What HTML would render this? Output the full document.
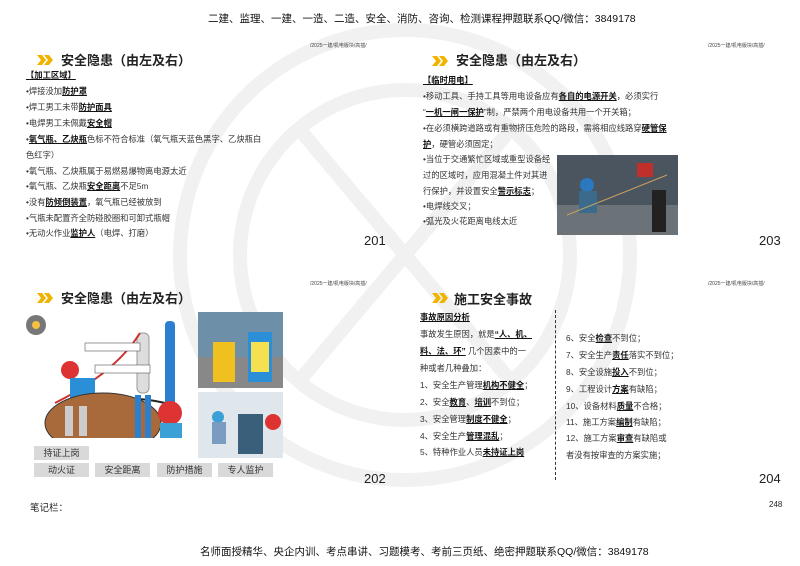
<!DOCTYPE html>
<html><head><meta charset="utf-8"><style>
*{margin:0;padding:0;box-sizing:border-box}
body{width:800px;height:566px;background:#fff;position:relative;overflow:hidden;font-family:"Liberation Sans","Noto Sans CJK SC",sans-serif;color:#222}
.a{position:absolute;white-space:nowrap}
.hd{font-size:10.5px;color:#111}
.path{font-size:5px;color:#444}
.tt{font-size:13px;font-weight:bold;color:#222}
.t{font-size:8.3px;color:#333}
.t b{font-weight:bold;text-decoration:underline;color:#111}
.pn{font-size:13px;color:#222}
.arrow{position:absolute;width:16px;height:10px}
.btn{position:absolute;background:#d9d9d9;font-size:9px;text-align:center;line-height:14px;color:#333;height:14px}
</style></head><body>
<svg class="a" style="left:0;top:0" width="800" height="566">
<g fill="none" stroke="#f1f1f1" stroke-width="14">
<circle cx="405" cy="255" r="225"/><circle cx="405" cy="255" r="165"/>
<path d="M300 130 L405 255 L510 130"/><path d="M300 380 L405 255 L510 380"/>
</g>
</svg>
<div class="a hd" style="left:208px;top:11px">二建、监理、一建、一造、二造、安全、消防、咨询、检测课程押题联系QQ/微信：3849178</div>

<!-- panel 201 -->
<div class="a path" style="left:310px;top:42px">/2025一建/机电版块/高插/</div>
<svg class="arrow" style="left:37px;top:55px" viewBox="0 0 16 10"><path d="M0 0h5l4 5-4 5H0l4-5z M7 0h5l4 5-4 5H7l4-5z" fill="#f0b400"/></svg>
<div class="a tt" style="left:61px;top:50px">安全隐患（由左及右）</div>
<div class="a t" style="left:26px;top:69px"><b>【加工区域】</b></div>
<div class="a t" style="left:26px;top:85px">•焊接没加<b>防护罩</b></div>
<div class="a t" style="left:26px;top:101px">•焊工男工未带<b>防护面具</b></div>
<div class="a t" style="left:26px;top:117px">•电焊男工未佩戴<b>安全帽</b></div>
<div class="a t" style="left:26px;top:133px">•<b>氧气瓶、乙炔瓶</b>色标不符合标准（氧气瓶天蓝色黑字、乙炔瓶白</div>
<div class="a t" style="left:26px;top:149px">色红字）</div>
<div class="a t" style="left:26px;top:165px">•氧气瓶、乙炔瓶属于易燃易爆物离电源太近</div>
<div class="a t" style="left:26px;top:180px">•氧气瓶、乙炔瓶<b>安全距离</b>不足5m</div>
<div class="a t" style="left:26px;top:196px">•没有<b>防倾倒装置</b>，氧气瓶已经被放到</div>
<div class="a t" style="left:26px;top:212px">•气瓶未配置齐全防碰胶圈和可卸式瓶帽</div>
<div class="a t" style="left:26px;top:227px">•无动火作业<b>监护人</b>（电焊、打磨）</div>
<div class="a pn" style="left:364px;top:233px">201</div>

<!-- panel 203 -->
<div class="a path" style="left:708px;top:42px">/2025一建/机电版块/高插/</div>
<svg class="arrow" style="left:432px;top:56px" viewBox="0 0 16 10"><path d="M0 0h5l4 5-4 5H0l4-5z M7 0h5l4 5-4 5H7l4-5z" fill="#f0b400"/></svg>
<div class="a tt" style="left:456px;top:50px">安全隐患（由左及右）</div>
<div class="a t" style="left:423px;top:74px"><b>【临时用电】</b></div>
<div class="a t" style="left:423px;top:90px">•移动工具、手持工具等用电设备应有<b>各自的电源开关</b>，必须实行</div>
<div class="a t" style="left:423px;top:106px">“<b>一机一闸一保护</b>”制，严禁两个用电设备共用一个开关箱；</div>
<div class="a t" style="left:423px;top:122px">•在必须横跨道路或有重物挤压危险的路段，需将相应线路穿<b>硬管保</b></div>
<div class="a t" style="left:423px;top:138px"><b>护</b>，硬管必须固定；</div>
<div class="a t" style="left:423px;top:153px">•当位于交通繁忙区域或重型设备经</div>
<div class="a t" style="left:423px;top:169px">过的区域时，应用混凝土件对其进</div>
<div class="a t" style="left:423px;top:185px">行保护，并设置安全<b>警示标志</b>；</div>
<div class="a t" style="left:423px;top:200px">•电焊线交叉；</div>
<div class="a t" style="left:423px;top:215px">•弧光及火花距离电线太近</div>
<svg class="a" style="left:557px;top:155px" width="121" height="80"><rect width="121" height="80" fill="#4a5560"/><rect x="0" y="50" width="121" height="30" fill="#6b7278"/><rect x="80" y="8" width="16" height="14" fill="#c0302a"/><rect x="95" y="35" width="14" height="42" fill="#222"/><circle cx="30" cy="30" r="7" fill="#2a78c0"/><rect x="22" y="36" width="18" height="22" fill="#3b6a8a"/><path d="M10 60 Q60 40 110 20" stroke="#c9a060" fill="none"/></svg>
<div class="a pn" style="left:759px;top:233px">203</div>

<!-- panel 202 -->
<div class="a path" style="left:310px;top:280px">/2025一建/机电版块/高插/</div>
<svg class="arrow" style="left:37px;top:293px" viewBox="0 0 16 10"><path d="M0 0h5l4 5-4 5H0l4-5z M7 0h5l4 5-4 5H7l4-5z" fill="#f0b400"/></svg>
<div class="a tt" style="left:61px;top:288px">安全隐患（由左及右）</div>
<svg class="a" style="left:25px;top:313px" width="170" height="125">
<circle cx="11" cy="12" r="10" fill="#777"/><circle cx="11" cy="12" r="4" fill="#f5c040"/>
<rect x="140" y="8" width="10" height="88" rx="4" fill="#2a7fcf"/><rect x="112" y="20" width="12" height="60" rx="5" fill="#ddd" stroke="#999"/>
<path d="M30 90 Q90 60 115 20" stroke="#c33" fill="none" stroke-width="2"/><path d="M40 92 Q100 80 140 90" stroke="#222" fill="none" stroke-width="2"/>
<circle cx="45" cy="57" r="9" fill="#d33"/><rect x="45" y="65" width="25" height="20" fill="#2a8fd6"/>
<rect x="60" y="30" width="55" height="8" fill="#fff" stroke="#555" stroke-width=".6"/><rect x="70" y="52" width="55" height="8" fill="#fff" stroke="#555" stroke-width=".6"/>
<ellipse cx="78" cy="110" rx="58" ry="30" fill="#a86a3a" stroke="#333"/><rect x="110" y="82" width="6" height="52" fill="#2a7fcf"/><rect x="120" y="82" width="6" height="52" fill="#2a7fcf"/>
<rect x="40" y="93" width="8" height="30" fill="#ccc"/><rect x="54" y="93" width="8" height="30" fill="#ccc"/>
<circle cx="145" cy="100" r="12" fill="#d33"/><rect x="135" y="110" width="22" height="20" fill="#3aa0d6"/>
</svg>
<svg class="a" style="left:198px;top:312px" width="85" height="76"><rect width="85" height="76" fill="#6d8fa8"/><rect y="45" width="85" height="31" fill="#888"/><rect x="15" y="30" width="22" height="40" fill="#f0c020"/><rect x="50" y="20" width="24" height="50" fill="#2a8fd6"/><rect x="53" y="30" width="18" height="30" fill="#f5e050"/></svg>
<svg class="a" style="left:198px;top:392px" width="85" height="66"><rect width="85" height="66" fill="#dfe6ec"/><rect x="40" y="22" width="25" height="40" fill="#3a5f7a"/><circle cx="20" cy="25" r="6" fill="#3aa0d6"/><rect x="14" y="30" width="14" height="22" fill="#7b9cc0"/><circle cx="75" cy="30" r="8" fill="#d33"/></svg>
<div class="btn" style="left:34px;top:446px;width:55px">持证上岗</div>
<div class="btn" style="left:34px;top:463px;width:55px">动火证</div>
<div class="btn" style="left:95px;top:463px;width:55px">安全距离</div>
<div class="btn" style="left:157px;top:463px;width:55px">防护措施</div>
<div class="btn" style="left:218px;top:463px;width:55px">专人监护</div>
<div class="a pn" style="left:364px;top:471px">202</div>

<!-- panel 204 -->
<div class="a path" style="left:708px;top:280px">/2025一建/机电版块/高插/</div>
<svg class="arrow" style="left:432px;top:293px" viewBox="0 0 16 10"><path d="M0 0h5l4 5-4 5H0l4-5z M7 0h5l4 5-4 5H7l4-5z" fill="#f0b400"/></svg>
<div class="a tt" style="left:454px;top:289px">施工安全事故</div>
<div class="a t" style="left:420px;top:311px"><b>事故原因分析</b></div>
<div class="a t" style="left:420px;top:328px">事故发生原因，就是<b>“人、机、</b></div>
<div class="a t" style="left:420px;top:345px"><b>料、法、环”</b> 几个因素中的一</div>
<div class="a t" style="left:420px;top:362px">种或者几种叠加：</div>
<div class="a t" style="left:420px;top:379px">1、安全生产管理<b>机构不健全</b>；</div>
<div class="a t" style="left:420px;top:396px">2、安全<b>教育</b>、<b>培训</b>不到位；</div>
<div class="a t" style="left:420px;top:413px">3、安全管理<b>制度不健全</b>；</div>
<div class="a t" style="left:420px;top:430px">4、安全生产<b>管理混乱</b>；</div>
<div class="a t" style="left:420px;top:446px">5、特种作业人员<b>未持证上岗</b></div>
<div class="a" style="left:555px;top:310px;height:170px;border-left:1.5px dashed #333"></div>
<div class="a t" style="left:566px;top:332px">6、安全<b>检查</b>不到位；</div>
<div class="a t" style="left:566px;top:349px">7、安全生产<b>责任</b>落实不到位；</div>
<div class="a t" style="left:566px;top:366px">8、安全设施<b>投入</b>不到位；</div>
<div class="a t" style="left:566px;top:383px">9、工程设计<b>方案</b>有缺陷；</div>
<div class="a t" style="left:566px;top:400px">10、设备材料<b>质量</b>不合格；</div>
<div class="a t" style="left:566px;top:416px">11、施工方案<b>编制</b>有缺陷；</div>
<div class="a t" style="left:566px;top:432px">12、施工方案<b>审查</b>有缺陷或</div>
<div class="a t" style="left:566px;top:449px">者没有按审查的方案实施；</div>
<div class="a pn" style="left:759px;top:471px">204</div>

<div class="a" style="left:30px;top:500px;font-size:9.5px">笔记栏：</div>
<div class="a" style="left:769px;top:500px;font-size:8px">248</div>
<div class="a hd" style="left:200px;top:544px">名师面授精华、央企内训、考点串讲、习题模考、考前三页纸、绝密押题联系QQ/微信：3849178</div>
</body></html>
